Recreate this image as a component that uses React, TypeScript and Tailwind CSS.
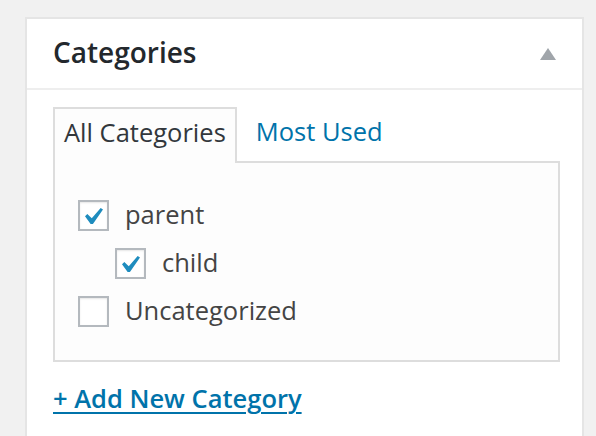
type Item = { label: string; checked: boolean; child?: boolean };

const items: Item[] = [
  { label: 'parent', checked: true },
  { label: 'child', checked: true, child: true },
  { label: 'Uncategorized', checked: false },
];

function Box({ checked }: { checked: boolean }) {
  return (
    <span className="flex h-[31px] w-[31px] shrink-0 items-center justify-center border-2 border-[#b4b9be] bg-white shadow-[inset_0_1px_2px_rgba(0,0,0,0.1)]">
      {checked && (
        <svg width="18" height="16" viewBox="5.78 4.89 10.39 9.32" preserveAspectRatio="none" className="mt-[1px]">
          <path d="M14.83 4.89l1.34.94-5.81 8.38H9.02L5.78 9.67l1.34-1.25 2.57 2.4z" fill="#1e8cbe" />
        </svg>
      )}
    </span>
  );
}

export default function App() {
  return (
    <div className="min-h-[436px] bg-[#f1f1f1] pl-[25px] pr-[12px] pt-[17px] font-['Open_Sans',sans-serif] text-[#444]">
      <div className="h-[419px] border-2 border-b-0 border-[#e5e5e5] bg-white">
        <div className="flex h-[71px] items-center justify-between border-b-2 border-[#eee] pl-[26px] pr-[26px]">
          <h2 className="-mt-[4px] text-[28px] font-semibold text-[#23282d]">Categories</h2>
          <svg width="16" height="12" viewBox="0 0 16 12">
            <path d="M8 0 L16 12 L0 12 Z" fill="#a0a5aa" />
          </svg>
        </div>
        <div className="px-[26px] pt-[17px]">
          <div className="flex items-end">
            <div className="relative -mb-[2px] flex h-[56px] items-center border-2 border-b-0 border-[#ddd] bg-[#fdfdfd] px-[9px] pb-[8px] text-[25.5px] text-[#32373c]">
              All Categories
            </div>
            <div className="flex h-[54px] items-center px-[19px] pb-[5px] text-[25.5px] text-[#0073aa]">Most Used</div>
          </div>
          <div className="h-[201px] w-[507px] border-2 border-[#ddd] bg-[#fdfdfd] pl-[23px] pt-[37px]">
            <div className="flex flex-col gap-[17px]">
              {items.map((it) => (
                <label key={it.label} className={`flex items-center gap-[16px] text-[25.5px] leading-[31px] text-[#444] ${it.child ? 'pl-[37px]' : ''}`}>
                  <Box checked={it.checked} />
                  <span className="-mt-[2px]">{it.label}</span>
                </label>
              ))}
            </div>
          </div>
          <a className="mt-[17px] inline-block text-[25.5px] font-semibold text-[#0073aa] underline decoration-2 underline-offset-[4px]" href="#">
            + Add New Category
          </a>
        </div>
      </div>
    </div>
  );
}
